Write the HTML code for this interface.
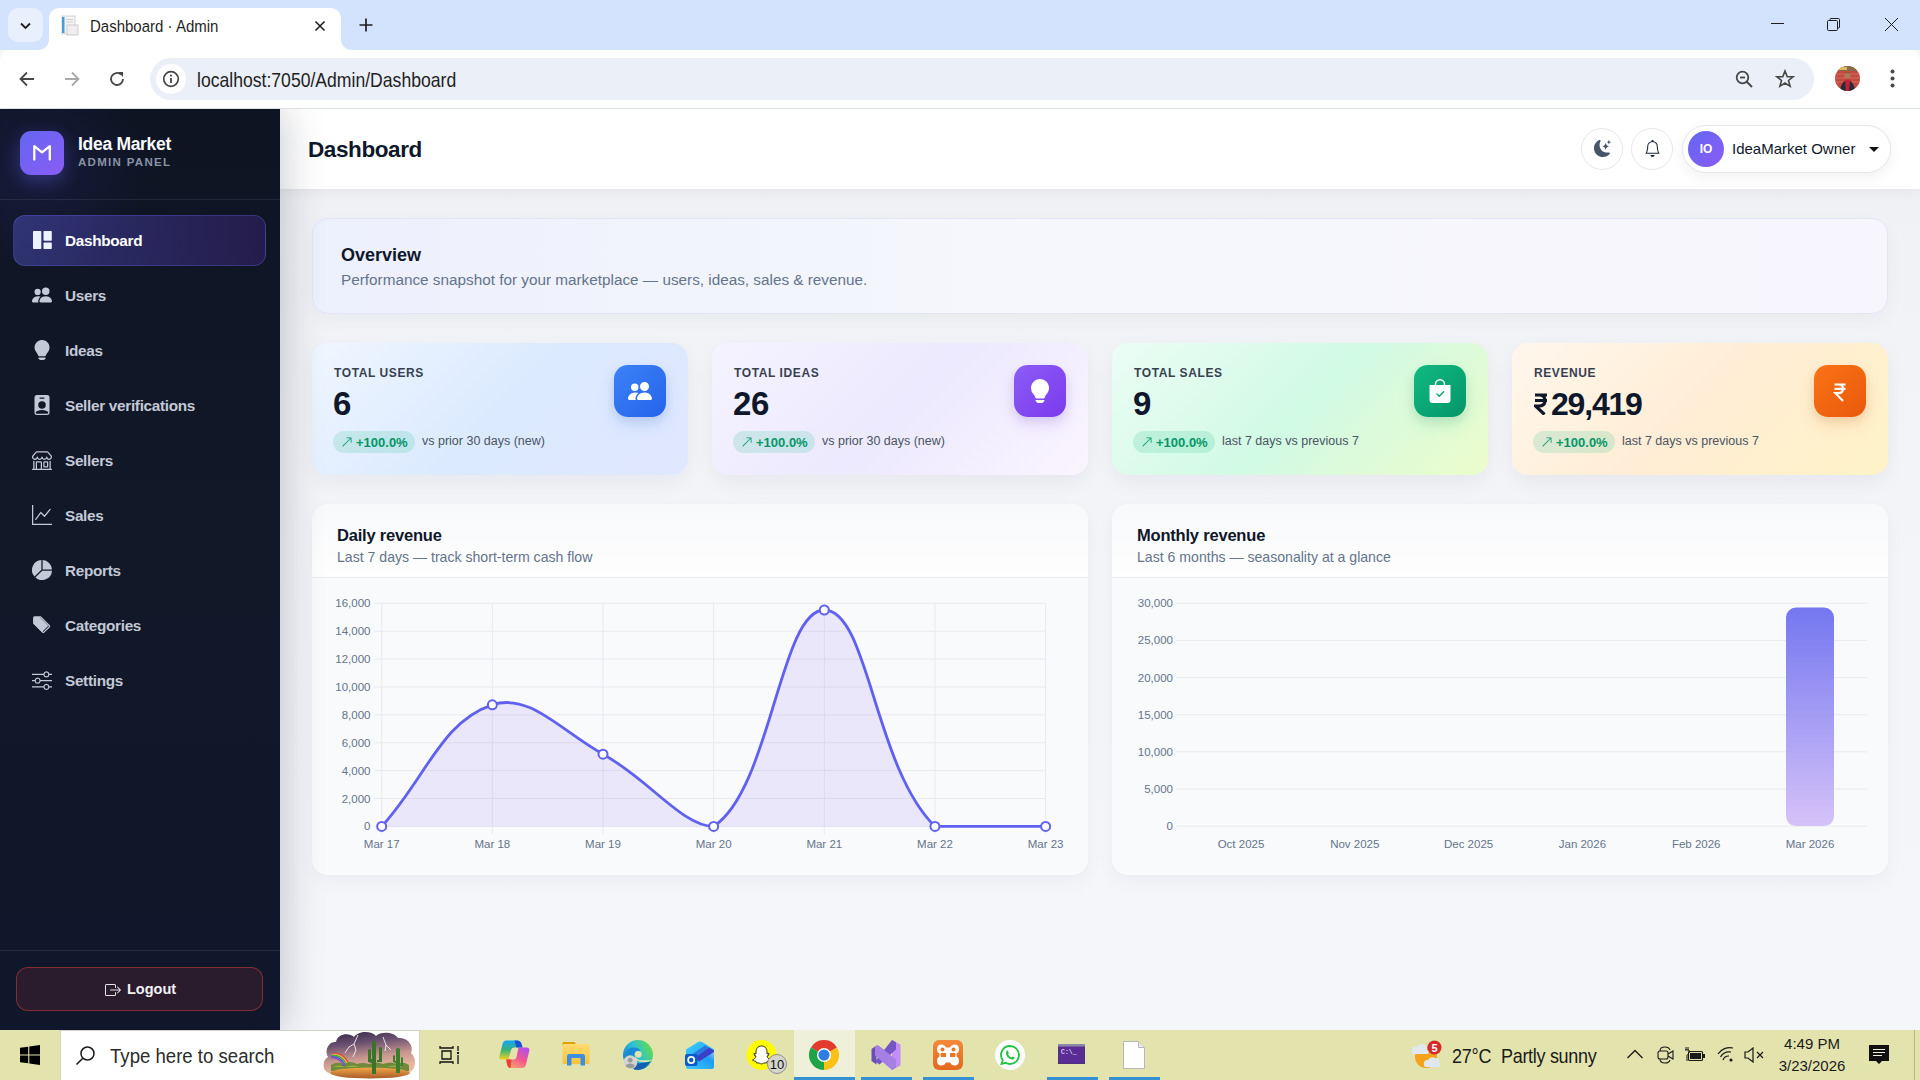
<!DOCTYPE html>
<html><head><meta charset="utf-8"><title>Dashboard · Admin</title>
<style>
*{box-sizing:border-box;margin:0;padding:0}
html,body{width:1920px;height:1080px;overflow:hidden;font-family:"Liberation Sans",sans-serif;background:#f5f6fa}
.abs{position:absolute}
/* ---------- browser chrome ---------- */
#tabstrip{position:absolute;left:0;top:0;width:1920px;height:50px;background:#d3e3fd;z-index:5}
#tabdd{position:absolute;left:8px;top:8px;width:35px;height:34px;border-radius:10px;background:#e8effd}
#tab{position:absolute;left:49px;top:8px;width:292px;height:42px;background:#fff;border-radius:10px 10px 0 0}
#tab:before,#tab:after{content:"";position:absolute;bottom:0;width:10px;height:10px;background:radial-gradient(circle at 0 0,transparent 10px,#fff 10.5px)}
#tab:before{left:-10px;background:radial-gradient(circle at 0 0,transparent 9.5px,#fff 10px)}
#tab:after{right:-10px;background:radial-gradient(circle at 100% 0,transparent 9.5px,#fff 10px)}
#tabtitle{position:absolute;left:41px;top:9px;font-size:15px;color:#1f1f1f;white-space:nowrap;transform:scaleY(1.1);transform-origin:0 0}
#toolbar{position:absolute;left:0;top:50px;width:1920px;height:58px;background:#fff;border-radius:10px 10px 0 0;z-index:5}
#tbline{position:absolute;left:0;top:108px;width:1920px;height:1px;background:#dcdfe3;z-index:5}
#omni{position:absolute;left:150px;top:8px;width:1664px;height:42px;border-radius:21px;background:#ebeff8}
#omniinfo{position:absolute;left:6px;top:6px;width:30px;height:30px;border-radius:15px;background:#fff}
#url{position:absolute;left:47px;top:11px;font-size:17.6px;color:#1f1f1f;white-space:nowrap;transform:scaleY(1.1);transform-origin:0 0}
/* ---------- sidebar ---------- */
#sidebar{position:absolute;z-index:2;left:0;top:109px;width:280px;height:921px;background:linear-gradient(180deg,#0e1422 0%,#111828 45%,#10172a 100%);
  box-shadow:2px 0 40px rgba(15,23,42,.24)}
#sbglow{position:absolute;left:0;top:0;width:280px;height:400px;background:radial-gradient(ellipse 170px 150px at 30px 60px,rgba(79,70,229,.13),transparent 70%)}
#sbhead{position:absolute;left:0;top:0;width:280px;height:91px;border-bottom:1px solid rgba(148,163,184,.14)}
#logo{position:absolute;left:20px;top:22px;width:44px;height:44px;border-radius:11px;background:linear-gradient(135deg,#6366f1,#8b5cf6);box-shadow:0 6px 18px rgba(99,102,241,.35)}
#brand{position:absolute;left:78px;top:25px;font-size:17.5px;font-weight:700;color:#f8fafc;letter-spacing:-.3px;white-space:nowrap}
#brandsub{position:absolute;left:78px;top:47px;font-size:11.5px;font-weight:700;color:#8a93a6;letter-spacing:1.3px;white-space:nowrap}
.nav{position:absolute;left:13px;width:253px;height:51px;border-radius:12px}
.nav.active{background:linear-gradient(90deg,rgba(99,102,241,.36),rgba(124,58,237,.2));border:1px solid rgba(99,102,241,.32)}
.nav svg{position:absolute;left:19px;top:15px;width:20px;height:20px;fill:#c3c9d6}
.nav.active svg{fill:#eef2ff}
.nav span{position:absolute;left:52px;top:17px;font-size:15.3px;font-weight:700;color:#c3c9d6;white-space:nowrap;letter-spacing:-.3px}
.nav.active span{color:#fff;top:16px;left:51px}
#sbfoot{position:absolute;left:0;top:841px;width:280px;height:1px;background:rgba(148,163,184,.14)}
#logout{position:absolute;left:16px;top:858px;width:247px;height:44px;border-radius:12px;background:#2a1b2d;border:1px solid rgba(239,68,68,.45)}
#logout span{position:absolute;left:110px;top:13px;font-size:14.5px;font-weight:700;color:#f1f1f4}
#logout svg{position:absolute;left:88px;top:14px;width:16px;height:16px}
/* ---------- main ---------- */
#main{position:absolute;left:280px;top:109px;width:1640px;height:921px;background:linear-gradient(180deg,#eff0f4 0px,#f2f3f7 240px,#f4f5f9 500px,#f5f6fa 921px);overflow:hidden}
#header{position:absolute;left:0;top:0;width:1640px;height:80px;background:#fff;box-shadow:0 2px 14px rgba(15,23,42,.06);z-index:1}
#ptitle{position:absolute;left:28px;top:28px;font-size:22.5px;font-weight:700;color:#0f172a;letter-spacing:-.4px}
.hbtn{position:absolute;top:19px;width:42px;height:42px;border-radius:21px;border:1px solid #e5e7eb;background:#fff}
#userpill{position:absolute;left:1402px;top:16px;width:209px;height:48px;border-radius:24px;border:1px solid #e5e7eb;background:#fff;box-shadow:0 4px 14px rgba(15,23,42,.06)}
#avatar{position:absolute;left:5px;top:5px;width:36px;height:36px;border-radius:18px;background:linear-gradient(135deg,#6366f1,#8b5cf6)}
#avatar span{position:absolute;left:0;top:11px;width:36px;text-align:center;font-size:12px;font-weight:700;color:#fff}
#uname{position:absolute;left:49px;top:14px;font-size:15px;color:#0f172a;white-space:nowrap}
#caret{position:absolute;left:186px;top:21px;width:0;height:0;border-left:5px solid transparent;border-right:5px solid transparent;border-top:5px solid #111}
#overview{position:absolute;left:32px;top:109px;width:1576px;height:96px;border-radius:16px;border:1px solid #e2e4f9;
  background:linear-gradient(90deg,#edf0fd 0%,#f5f7fc 45%,#f7f5fd 100%);box-shadow:0 6px 20px rgba(15,23,42,.035)}
#ovt{position:absolute;left:28px;top:26px;font-size:18px;font-weight:700;color:#0f172a}
#ovs{position:absolute;left:28px;top:52px;font-size:15.3px;color:#64748b;white-space:nowrap}
.stat{position:absolute;top:234px;width:376px;height:132px;border-radius:16px;box-shadow:0 8px 22px rgba(15,23,42,.05)}
.stat .lbl{position:absolute;left:22px;top:23px;font-size:12px;font-weight:700;letter-spacing:.6px;color:#374151;white-space:nowrap}
.stat .val{position:absolute;left:21px;top:42px;font-size:33px;font-weight:700;color:#0f172a;letter-spacing:-.3px;white-space:nowrap}
.stat .badge{position:absolute;left:21px;top:88px;width:82px;height:22px;border-radius:11px;background:rgba(16,185,129,.16)}
.stat .badge span{position:absolute;left:23px;top:4px;font-size:13px;font-weight:700;color:#059669;white-space:nowrap}
.stat .badge svg{position:absolute;left:8px;top:5px;width:12px;height:12px}
.stat .note{position:absolute;left:110px;top:91px;font-size:12.5px;color:#4b5563;white-space:nowrap}
.stat .ico{position:absolute;left:302px;top:22px;width:52px;height:52px;border-radius:14px}
.stat .ico svg{position:absolute;left:14px;top:14px;width:24px;height:24px;fill:#fff}
.chart{position:absolute;top:395px;width:776px;height:371px;border-radius:16px;background:#f9fafc;box-shadow:0 6px 18px rgba(15,23,42,.045);overflow:hidden}
.chart .ch{position:absolute;left:0;top:0;width:776px;height:74px;background:linear-gradient(180deg,#f8f9fb,#fefefe);border-bottom:1px solid #e9ebef}
.chart .ct{position:absolute;left:25px;top:22px;font-size:16.5px;letter-spacing:-.2px;font-weight:700;color:#0f172a;white-space:nowrap}
.chart .cs{position:absolute;left:25px;top:45px;font-size:14.1px;color:#64748b;white-space:nowrap}
.tk{font-family:"Liberation Sans",sans-serif;font-size:11.5px;fill:#64748b}
/* ---------- taskbar ---------- */
#taskbar{position:absolute;z-index:6;left:0;top:1030px;width:1920px;height:50px;background:#e3e3ae}
#search{position:absolute;left:60px;top:0px;width:360px;height:50px;background:#fff;border:1px solid #cfcfc4;border-bottom:none}
#search span{position:absolute;left:49px;top:13px;font-size:18.6px;color:#2b2b2b;white-space:nowrap;transform:scaleY(1.1);transform-origin:0 0}
</style></head>
<body>
<!-- browser chrome -->
<div id="tabstrip">
  <div id="tabdd"><svg class="abs" style="left:10px;top:10px" width="15" height="15" viewBox="0 0 15 15"><path d="M3 5.5 L7.5 10 L12 5.5" stroke="#1f1f1f" stroke-width="1.8" fill="none"/></svg></div>
  <div id="tab">
    <svg class="abs" style="left:11px;top:7px" width="20" height="21" viewBox="0 0 20 21"><rect x="2" y="1" width="13" height="18" fill="#f4f4f4" stroke="#c9c9c9" stroke-width=".8"/><rect x="2" y="2" width="2.5" height="16" fill="#4b9ad8"/><rect x="7" y="10" width="11" height="10" fill="#eee" stroke="#c4c4c4" stroke-width=".8"/><rect x="6" y="4" width="7" height="1" fill="#ccc"/><rect x="6" y="6.5" width="7" height="1" fill="#ccc"/></svg>
    <div id="tabtitle">Dashboard · Admin</div>
    <svg class="abs" style="left:265px;top:12px" width="12" height="12" viewBox="0 0 12 12"><path d="M1.5 1.5 L10.5 10.5 M10.5 1.5 L1.5 10.5" stroke="#1f1f1f" stroke-width="1.6"/></svg>
  </div>
  <svg class="abs" style="left:358px;top:17px" width="16" height="16" viewBox="0 0 16 16"><path d="M8 1.5 V14.5 M1.5 8 H14.5" stroke="#1f1f1f" stroke-width="1.7"/></svg>
  <svg class="abs" style="left:1770px;top:17px" width="15" height="14" viewBox="0 0 15 14"><path d="M1 6.5 H14" stroke="#1f1f1f" stroke-width="1"/></svg>
  <svg class="abs" style="left:1826px;top:17px" width="15" height="15" viewBox="0 0 15 15"><rect x="1.5" y="3.5" width="10" height="10" rx="1" fill="none" stroke="#1f1f1f" stroke-width="1"/><path d="M4 3.5 V2.5 Q4 1.5 5 1.5 H12.5 Q13.5 1.5 13.5 2.5 V10 Q13.5 11 12.5 11 H11.5" fill="none" stroke="#1f1f1f" stroke-width="1"/></svg>
  <svg class="abs" style="left:1884px;top:17px" width="15" height="15" viewBox="0 0 15 15"><path d="M1 1 L14 14 M14 1 L1 14" stroke="#1f1f1f" stroke-width="1"/></svg>
</div>
<div id="toolbar">
  <svg class="abs" style="left:18px;top:20px" width="18" height="18" viewBox="0 0 18 18"><path d="M16 9 H2.5 M9 2.5 L2.5 9 L9 15.5" stroke="#474747" stroke-width="1.8" fill="none"/></svg>
  <svg class="abs" style="left:63px;top:20px" width="18" height="18" viewBox="0 0 18 18"><path d="M2 9 H15.5 M9 2.5 L15.5 9 L9 15.5" stroke="#a8a8a8" stroke-width="1.8" fill="none"/></svg>
  <svg class="abs" style="left:108px;top:20px" width="18" height="18" viewBox="0 0 18 18"><path d="M15 9 A6 6 0 1 1 13 4.5" stroke="#474747" stroke-width="1.8" fill="none"/><path d="M10 2 H15 V7 Z" fill="#474747"/></svg>
  <div id="omni">
    <div id="omniinfo"><svg class="abs" style="left:6px;top:6px" width="18" height="18" viewBox="0 0 18 18"><circle cx="9" cy="9" r="7.3" stroke="#474747" stroke-width="1.7" fill="none"/><rect x="8.1" y="8" width="1.8" height="5" fill="#474747"/><circle cx="9" cy="5.6" r="1.1" fill="#474747"/></svg></div>
    <div id="url">localhost:7050/Admin/Dashboard</div>
    <svg class="abs" style="left:1585px;top:12px" width="20" height="20" viewBox="0 0 20 20"><circle cx="7.5" cy="7.5" r="5.8" stroke="#474747" stroke-width="1.8" fill="none"/><path d="M5 7.5 H10" stroke="#474747" stroke-width="1.8"/><path d="M11.5 11.5 L17 17" stroke="#474747" stroke-width="1.9"/></svg>
    <svg class="abs" style="left:1625px;top:11px" width="20" height="20" viewBox="0 0 20 20"><path d="M10 2 L12.2 7.6 L18 7.8 L13.5 11.5 L15.1 17.3 L10 14 L4.9 17.3 L6.5 11.5 L2 7.8 L7.8 7.6 Z" stroke="#474747" stroke-width="1.6" fill="none" stroke-linejoin="miter"/></svg>
  </div>
  <svg class="abs" style="left:1835px;top:16px" width="25" height="25" viewBox="0 0 25 25"><defs><clipPath id="avc"><circle cx="12.5" cy="12.5" r="12.5"/></clipPath></defs><g clip-path="url(#avc)">
    <rect width="25" height="25" fill="#c24a3e"/>
    <rect x="0" y="0" width="25" height="5" fill="#8a6a4a"/><rect x="4" y="1" width="8" height="3" fill="#d8b860"/>
    <path d="M0 8 H25 M0 12 H25 M0 16 H25" stroke="#e07a6a" stroke-width=".7"/>
    <circle cx="12.5" cy="9.5" r="3.3" fill="#b07858"/><path d="M9 8 Q12.5 4.5 16 8 Q14 6.5 12.5 6.5 Q11 6.5 9 8 Z" fill="#2a1e1e"/>
    <path d="M5 25 Q6 15 12.5 14 Q19 15 20 25 Z" fill="#2a2a3a"/>
    <path d="M10 14 Q12.5 13 15 14 L14 25 H11 Z" fill="#c8203a"/>
  </g></svg>
  <svg class="abs" style="left:1888px;top:19px" width="9" height="20" viewBox="0 0 9 20"><circle cx="4.5" cy="2.5" r="2" fill="#474747"/><circle cx="4.5" cy="9.5" r="2" fill="#474747"/><circle cx="4.5" cy="16.5" r="2" fill="#474747"/></svg>
</div>
<div id="tbline"></div>

<!-- sidebar -->
<div id="sidebar">
  <div id="sbglow"></div>
  <div id="sbhead">
    <div id="logo"><svg class="abs" style="left:11px;top:13px" width="22" height="18" viewBox="0 0 22 18"><path d="M3.3 15.6 V2.2 L11.05 8.4 L18.8 2.2 V15.6" stroke="#fff" stroke-width="2.3" fill="none" stroke-linejoin="round" stroke-linecap="round"/></svg></div>
    <div id="brand">Idea Market</div>
    <div id="brandsub">ADMIN PANEL</div>
  </div>
  <div class="nav active" style="top:106px">
    <svg viewBox="0 0 20 20" style="left:18px;top:14px;width:20px;height:20px"><rect x="1" y="1" width="8.3" height="18" rx=".8"/><rect x="11.5" y="1" width="8.3" height="9.7" rx=".8"/><rect x="11.5" y="12.5" width="8.3" height="6.5" rx=".8"/></svg>
    <span>Dashboard</span></div>
  <div class="nav" style="top:161px">
    <svg viewBox="0 0 16 16"><path d="M7 14s-1 0-1-1 1-4 5-4 5 3 5 4-1 1-1 1zm4-6a3 3 0 1 0 0-6 3 3 0 0 0 0 6m-5.784 6A2.24 2.24 0 0 1 5 13c0-1.355.68-2.75 1.936-3.72A6.3 6.3 0 0 0 5 9c-4 0-5 3-5 4s1 1 1 1zM4.5 8a2.5 2.5 0 1 0 0-5 2.5 2.5 0 0 0 0 5"/></svg>
    <span>Users</span></div>
  <div class="nav" style="top:216px">
    <svg viewBox="0 0 16 16"><path d="M2 6a6 6 0 1 1 10.174 4.31c-.203.196-.359.4-.453.619l-.762 1.769A.5.5 0 0 1 10.5 13h-5a.5.5 0 0 1-.46-.302l-.761-1.77a2 2 0 0 0-.453-.618A5.98 5.98 0 0 1 2 6m3 8.5a.5.5 0 0 1 .5-.5h5a.5.5 0 0 1 0 1l-.224.447a1 1 0 0 1-.894.553H6.618a1 1 0 0 1-.894-.553L5.5 15a.5.5 0 0 1-.5-.5"/></svg>
    <span>Ideas</span></div>
  <div class="nav" style="top:271px">
    <svg viewBox="0 0 16 16"><path d="M2 2a2 2 0 0 1 2-2h8a2 2 0 0 1 2 2v12a2 2 0 0 1-2 2H4a2 2 0 0 1-2-2zm4.5 0a.5.5 0 0 0 0 1h3a.5.5 0 0 0 0-1zM8 11a3 3 0 1 0 0-6 3 3 0 0 0 0 6m5 2.755C12.146 12.825 10.623 12 8 12s-4.146.826-5 1.755V14a1 1 0 0 0 1 1h8a1 1 0 0 0 1-1z"/></svg>
    <span>Seller verifications</span></div>
  <div class="nav" style="top:326px">
    <svg viewBox="0 0 16 16"><path d="M2.97 1.35A1 1 0 0 1 3.73 1h8.54a1 1 0 0 1 .76.35l2.609 3.044A1.5 1.5 0 0 1 16 5.37v.255a2.375 2.375 0 0 1-4.25 1.458A2.37 2.37 0 0 1 9.875 8 2.37 2.37 0 0 1 8 7.083 2.37 2.37 0 0 1 6.125 8a2.37 2.37 0 0 1-1.875-.917A2.375 2.375 0 0 1 0 5.625V5.37a1.5 1.5 0 0 1 .361-.976zm1.78 4.275a1.375 1.375 0 0 0 2.75 0 .5.5 0 0 1 1 0 1.375 1.375 0 0 0 2.75 0 .5.5 0 0 1 1 0 1.375 1.375 0 1 0 2.75 0V5.37a.5.5 0 0 0-.12-.325L12.27 2H3.73L1.12 5.045A.5.5 0 0 0 1 5.37v.255a1.375 1.375 0 0 0 2.75 0 .5.5 0 0 1 1 0M1.5 8.5A.5.5 0 0 1 2 9v6h1v-5a1 1 0 0 1 1-1h3a1 1 0 0 1 1 1v5h6V9a.5.5 0 0 1 1 0v6h.5a.5.5 0 0 1 0 1H.5a.5.5 0 0 1 0-1H1V9a.5.5 0 0 1 .5-.5M4 15h3v-5H4zm5-5a1 1 0 0 1 1-1h2a1 1 0 0 1 1 1v3a1 1 0 0 1-1 1h-2a1 1 0 0 1-1-1zm3 0h-2v3h2z"/></svg>
    <span>Sellers</span></div>
  <div class="nav" style="top:381px">
    <svg viewBox="0 0 16 16"><path fill-rule="evenodd" d="M0 0h1v15h15v1H0zm14.817 3.113a.5.5 0 0 1 .07.704l-4.5 5.5a.5.5 0 0 1-.74.037L7.06 6.767l-3.656 5.027a.5.5 0 0 1-.808-.588l4-5.5a.5.5 0 0 1 .758-.06l2.609 2.61 4.15-5.073a.5.5 0 0 1 .704-.07"/></svg>
    <span>Sales</span></div>
  <div class="nav" style="top:436px">
    <svg viewBox="0 0 16 16"><path d="M15.985 8.5H8.207l-5.5 5.5a8 8 0 0 0 13.277-5.5zM2 13.292A8 8 0 0 1 7.5.015v7.778zM8.5.015V7.5h7.485A8 8 0 0 0 8.5.015"/></svg>
    <span>Reports</span></div>
  <div class="nav" style="top:491px">
    <svg viewBox="0 0 16 16"><path d="M2 2v4.586l7 7L13.586 9l-7-7zM1 2a1 1 0 0 1 1-1h4.586a1 1 0 0 1 .707.293l7 7a1 1 0 0 1 0 1.414l-4.586 4.586a1 1 0 0 1-1.414 0l-7-7A1 1 0 0 1 1 6.586z"/><path d="M2 2v4.586l7 7L13.586 9l-7-7zm2.5 3a.5.5 0 1 1 0-1 .5.5 0 0 1 0 1" style="display:none"/><path d="M1 2.5 v4 l7 7 l5-5 l-7-7 h-4 z M4.5 6 a1.5 1.5 0 1 0 0-3 a1.5 1.5 0 0 0 0 3"/></svg>
    <span>Categories</span></div>
  <div class="nav" style="top:546px">
    <svg viewBox="0 0 16 16"><path fill-rule="evenodd" d="M11.5 2a1.5 1.5 0 1 0 0 3 1.5 1.5 0 0 0 0-3M9.05 3a2.5 2.5 0 0 1 4.9 0H16v1h-2.05a2.5 2.5 0 0 1-4.9 0H0V3zM4.5 7a1.5 1.5 0 1 0 0 3 1.5 1.5 0 0 0 0-3M2.05 8a2.5 2.5 0 0 1 4.9 0H16v1H6.95a2.5 2.5 0 0 1-4.9 0H0V8zm9.45 4a1.5 1.5 0 1 0 0 3 1.5 1.5 0 0 0 0-3m-2.45 1a2.5 2.5 0 0 1 4.9 0H16v1h-2.05a2.5 2.5 0 0 1-4.9 0H0v-1z"/></svg>
    <span>Settings</span></div>
  <div id="sbfoot"></div>
  <div id="logout">
    <svg viewBox="0 0 16 16" fill="#e4e4e8"><path fill-rule="evenodd" d="M10 12.5a.5.5 0 0 1-.5.5h-8a.5.5 0 0 1-.5-.5v-9a.5.5 0 0 1 .5-.5h8a.5.5 0 0 1 .5.5v2a.5.5 0 0 0 1 0v-2A1.5 1.5 0 0 0 9.5 2h-8A1.5 1.5 0 0 0 0 3.5v9A1.5 1.5 0 0 0 1.5 14h8a1.5 1.5 0 0 0 1.5-1.5v-2a.5.5 0 0 0-1 0z"/><path fill-rule="evenodd" d="M15.854 8.354a.5.5 0 0 0 0-.708l-3-3a.5.5 0 0 0-.708.708L14.293 7.5H5.5a.5.5 0 0 0 0 1h8.793l-2.147 2.146a.5.5 0 0 0 .708.708z"/></svg>
    <span>Logout</span></div>
</div>

<!-- main -->
<div id="main">
  <div id="header">
    <div id="ptitle">Dashboard</div>
    <div class="hbtn" style="left:1301px"><svg class="abs" style="left:12px;top:11px" width="17" height="17" viewBox="0 0 16 16" fill="#475569"><path d="M6 .278a.77.77 0 0 1 .08.858 7.2 7.2 0 0 0-.878 3.46c0 4.021 3.278 7.277 7.318 7.277q.792-.001 1.533-.16a.79.79 0 0 1 .81.316.73.73 0 0 1-.031.893A8.350 8.350 0 0 1 8.344 16C3.734 16 0 12.286 0 7.710 0 4.266 2.114 1.312 5.124.06A.75.75 0 0 1 6 .278"/><path d="M10.794 3.148a.217.217 0 0 1 .412 0l.387 1.162c.173.518.579.924 1.097 1.097l1.162.387a.217.217 0 0 1 0 .412l-1.162.387a1.73 1.73 0 0 0-1.097 1.097l-.387 1.162a.217.217 0 0 1-.412 0l-.387-1.162A1.73 1.730 0 0 0 9.31 6.593l-1.162-.387a.217.217 0 0 1 0-.412l1.162-.387a1.73 1.73 0 0 0 1.097-1.097zM13.863.099a.145.145 0 0 1 .274 0l.258.774c.115.346.386.617.732.732l.774.258a.145.145 0 0 1 0 .274l-.774.258a1.16 1.16 0 0 0-.732.732l-.258.774a.145.145 0 0 1-.274 0l-.258-.774a1.16 1.16 0 0 0-.732-.732l-.774-.258a.145.145 0 0 1 0-.274l.774-.258c.346-.115.617-.386.732-.732z"/></svg></div>
    <div class="hbtn" style="left:1351px"><svg class="abs" style="left:12px;top:11px" width="17" height="17" viewBox="0 0 16 16" fill="#1e293b"><path d="M8 16a2 2 0 0 0 2-2H6a2 2 0 0 0 2 2M8 1.918l-.797.161A4 4 0 0 0 4 6c0 .628-.134 2.197-.459 3.742-.16.767-.376 1.566-.663 2.258h10.244c-.287-.692-.502-1.490-.663-2.258C12.134 8.197 12 6.628 12 6a4 4 0 0 0-3.203-3.920zM14.220 12c.223.447.481.801.78 1H1c.299-.199.557-.553.78-1C2.680 10.200 3 6.880 3 6c0-2.420 1.720-4.440 4.005-4.901a1 1 0 1 1 1.990 0A5 5 0 0 1 13 6c0 .880.320 4.200 1.220 6"/></svg></div>
    <div id="userpill"><div id="avatar"><span>IO</span></div><div id="uname">IdeaMarket Owner</div><div id="caret"></div></div>
  </div>
  <div id="overview">
    <div id="ovt">Overview</div>
    <div id="ovs">Performance snapshot for your marketplace — users, ideas, sales &amp; revenue.</div>
  </div>
  <div class="stat" style="left:32px;background:linear-gradient(135deg,#eff6ff 0%,#dbeafe 50%,#e0e7ff 100%)">
    <div class="lbl">TOTAL USERS</div><div class="val">6</div>
    <div class="badge"><svg viewBox="0 0 16 16" fill="#059669"><path fill-rule="evenodd" d="M14 2.5a.5.5 0 0 0-.5-.5h-6a.5.5 0 0 0 0 1h4.793L2.146 13.146a.5.5 0 0 0 .708.708L13 3.707V8.5a.5.5 0 0 0 1 0z"/></svg><span>+100.0%</span></div><div class="note">vs prior 30 days (new)</div>
    <div class="ico" style="background:linear-gradient(135deg,#3b82f6,#2563eb);box-shadow:0 8px 16px rgba(59,130,246,.16),0 4px 10px rgba(15,23,42,.08)"><svg viewBox="0 0 16 16"><path d="M7 14s-1 0-1-1 1-4 5-4 5 3 5 4-1 1-1 1zm4-6a3 3 0 1 0 0-6 3 3 0 0 0 0 6m-5.784 6A2.24 2.24 0 0 1 5 13c0-1.355.68-2.75 1.936-3.72A6.3 6.3 0 0 0 5 9c-4 0-5 3-5 4s1 1 1 1zM4.5 8a2.5 2.5 0 1 0 0-5 2.5 2.5 0 0 0 0 5"/></svg></div>
  </div>
  <div class="stat" style="left:432px;background:linear-gradient(135deg,#f5f3ff 0%,#ede9fe 50%,#faf5ff 100%)">
    <div class="lbl">TOTAL IDEAS</div><div class="val">26</div>
    <div class="badge"><svg viewBox="0 0 16 16" fill="#059669"><path fill-rule="evenodd" d="M14 2.5a.5.5 0 0 0-.5-.5h-6a.5.5 0 0 0 0 1h4.793L2.146 13.146a.5.5 0 0 0 .708.708L13 3.707V8.5a.5.5 0 0 0 1 0z"/></svg><span>+100.0%</span></div><div class="note">vs prior 30 days (new)</div>
    <div class="ico" style="background:linear-gradient(135deg,#8b5cf6,#7c3aed);box-shadow:0 8px 16px rgba(139,92,246,.16),0 4px 10px rgba(15,23,42,.08)"><svg viewBox="0 0 16 16"><path d="M2 6a6 6 0 1 1 10.174 4.31c-.203.196-.359.4-.453.619l-.762 1.769A.5.5 0 0 1 10.5 13h-5a.5.5 0 0 1-.46-.302l-.761-1.77a2 2 0 0 0-.453-.618A5.98 5.98 0 0 1 2 6m3 8.5a.5.5 0 0 1 .5-.5h5a.5.5 0 0 1 0 1l-.224.447a1 1 0 0 1-.894.553H6.618a1 1 0 0 1-.894-.553L5.5 15a.5.5 0 0 1-.5-.5"/></svg></div>
  </div>
  <div class="stat" style="left:832px;background:linear-gradient(135deg,#ecfdf5 0%,#d1fae5 50%,#ecfccb 100%)">
    <div class="lbl">TOTAL SALES</div><div class="val">9</div>
    <div class="badge"><svg viewBox="0 0 16 16" fill="#059669"><path fill-rule="evenodd" d="M14 2.5a.5.5 0 0 0-.5-.5h-6a.5.5 0 0 0 0 1h4.793L2.146 13.146a.5.5 0 0 0 .708.708L13 3.707V8.5a.5.5 0 0 0 1 0z"/></svg><span>+100.0%</span></div><div class="note">last 7 days vs previous 7</div>
    <div class="ico" style="background:linear-gradient(135deg,#10b981,#059669);box-shadow:0 8px 16px rgba(16,185,129,.16),0 4px 10px rgba(15,23,42,.08)"><svg viewBox="0 0 16 16"><path fill-rule="evenodd" d="M10.5 3.5a2.5 2.5 0 0 0-5 0V4h5zm1 0V4H15v10a2 2 0 0 1-2 2H3a2 2 0 0 1-2-2V4h3.5v-.5a3.5 3.5 0 1 1 7 0m-.646 5.354a.5.5 0 0 0-.708-.708L7.5 10.793 6.354 9.646a.5.5 0 1 0-.708.708l1.5 1.5a.5.5 0 0 0 .708 0z"/></svg></div>
  </div>
  <div class="stat" style="left:1232px;background:linear-gradient(135deg,#fff7ed 0%,#ffedd5 50%,#fef3c7 100%)">
    <div class="lbl">REVENUE</div><div class="val" style="left:22px"><svg style="display:inline-block;vertical-align:baseline;margin-right:3px" width="14" height="22" viewBox="0 0 14 22"><path d="M1 2 H13 M1 7.5 H13 M1 2 H5 C10 2 11 4.5 11 7.5 C11 11.5 8 13 4.5 13 H1.5 L10.5 21.5" stroke="#0f172a" stroke-width="3.2" fill="none" stroke-linejoin="miter"/></svg><span style="letter-spacing:-1.2px;font-size:32px">29,419</span></div>
    <div class="badge"><svg viewBox="0 0 16 16" fill="#059669"><path fill-rule="evenodd" d="M14 2.5a.5.5 0 0 0-.5-.5h-6a.5.5 0 0 0 0 1h4.793L2.146 13.146a.5.5 0 0 0 .708.708L13 3.707V8.5a.5.5 0 0 0 1 0z"/></svg><span>+100.0%</span></div><div class="note">last 7 days vs previous 7</div>
    <div class="ico" style="background:linear-gradient(135deg,#f97316,#ea580c);box-shadow:0 8px 16px rgba(249,115,22,.16),0 4px 10px rgba(15,23,42,.08)"><svg viewBox="0 0 24 24" style="fill:none"><path d="M6.5 5.5 H17.5 M6.5 9.8 H17.5 M6.5 5.5 H10 C14 5.5 15 7.5 15 9.8 C15 12.8 12.6 14.2 10 14.2 H7.5 L15 22" stroke="#fff" stroke-width="2.2" fill="none"/></svg></div>
  </div>
  <div class="chart" style="left:32px"><div class="ch"><div class="ct">Daily revenue</div><div class="cs">Last 7 days — track short-term cash flow</div></div>
    <svg id="dsvg" class="abs" style="left:0;top:0" width="776" height="371" viewBox="312 504 776 371"><line x1="374" y1="826.40" x2="1045.6" y2="826.40" stroke="#e8eaee" stroke-width="1"/>
<text x="370.5" y="830.40" text-anchor="end" class="tk">0</text>
<line x1="374" y1="798.51" x2="1045.6" y2="798.51" stroke="#e8eaee" stroke-width="1"/>
<text x="370.5" y="802.51" text-anchor="end" class="tk">2,000</text>
<line x1="374" y1="770.62" x2="1045.6" y2="770.62" stroke="#e8eaee" stroke-width="1"/>
<text x="370.5" y="774.62" text-anchor="end" class="tk">4,000</text>
<line x1="374" y1="742.74" x2="1045.6" y2="742.74" stroke="#e8eaee" stroke-width="1"/>
<text x="370.5" y="746.74" text-anchor="end" class="tk">6,000</text>
<line x1="374" y1="714.85" x2="1045.6" y2="714.85" stroke="#e8eaee" stroke-width="1"/>
<text x="370.5" y="718.85" text-anchor="end" class="tk">8,000</text>
<line x1="374" y1="686.96" x2="1045.6" y2="686.96" stroke="#e8eaee" stroke-width="1"/>
<text x="370.5" y="690.96" text-anchor="end" class="tk">10,000</text>
<line x1="374" y1="659.07" x2="1045.6" y2="659.07" stroke="#e8eaee" stroke-width="1"/>
<text x="370.5" y="663.07" text-anchor="end" class="tk">12,000</text>
<line x1="374" y1="631.19" x2="1045.6" y2="631.19" stroke="#e8eaee" stroke-width="1"/>
<text x="370.5" y="635.19" text-anchor="end" class="tk">14,000</text>
<line x1="374" y1="603.30" x2="1045.6" y2="603.30" stroke="#e8eaee" stroke-width="1"/>
<text x="370.5" y="607.30" text-anchor="end" class="tk">16,000</text>
<line x1="381.70" y1="603.3" x2="381.70" y2="834.4" stroke="#e8eaee" stroke-width="1"/>
<text x="381.70" y="848.00" text-anchor="middle" class="tk">Mar 17</text>
<line x1="492.35" y1="603.3" x2="492.35" y2="834.4" stroke="#e8eaee" stroke-width="1"/>
<text x="492.35" y="848.00" text-anchor="middle" class="tk">Mar 18</text>
<line x1="603.00" y1="603.3" x2="603.00" y2="834.4" stroke="#e8eaee" stroke-width="1"/>
<text x="603.00" y="848.00" text-anchor="middle" class="tk">Mar 19</text>
<line x1="713.65" y1="603.3" x2="713.65" y2="834.4" stroke="#e8eaee" stroke-width="1"/>
<text x="713.65" y="848.00" text-anchor="middle" class="tk">Mar 20</text>
<line x1="824.30" y1="603.3" x2="824.30" y2="834.4" stroke="#e8eaee" stroke-width="1"/>
<text x="824.30" y="848.00" text-anchor="middle" class="tk">Mar 21</text>
<line x1="934.95" y1="603.3" x2="934.95" y2="834.4" stroke="#e8eaee" stroke-width="1"/>
<text x="934.95" y="848.00" text-anchor="middle" class="tk">Mar 22</text>
<line x1="1045.60" y1="603.3" x2="1045.60" y2="834.4" stroke="#e8eaee" stroke-width="1"/>
<text x="1045.60" y="848.00" text-anchor="middle" class="tk">Mar 23</text>
<path d="M381.70,826.40 C425.96,777.76 441.39,721.44 492.35,704.81 C529.91,692.55 560.66,730.91 603.00,754.17 C649.18,779.54 682.47,826.40 713.65,826.40 C770.99,789.04 780.04,610.01 824.30,610.01 C868.56,610.01 874.12,766.92 934.95,826.40 C962.64,826.40 1001.34,826.40 1045.60,826.40 L1045.60,826.40 L381.70,826.40 Z" fill="rgba(130,110,235,.13)"/>
<path d="M381.70,826.40 C425.96,777.76 441.39,721.44 492.35,704.81 C529.91,692.55 560.66,730.91 603.00,754.17 C649.18,779.54 682.47,826.40 713.65,826.40 C770.99,789.04 780.04,610.01 824.30,610.01 C868.56,610.01 874.12,766.92 934.95,826.40 C962.64,826.40 1001.34,826.40 1045.60,826.40" fill="none" stroke="#6161f0" stroke-width="2.8"/>
<circle cx="381.70" cy="826.40" r="4.5" fill="#fff" stroke="#6161f0" stroke-width="2"/>
<circle cx="492.35" cy="704.81" r="4.5" fill="#fff" stroke="#6161f0" stroke-width="2"/>
<circle cx="603.00" cy="754.17" r="4.5" fill="#fff" stroke="#6161f0" stroke-width="2"/>
<circle cx="713.65" cy="826.40" r="4.5" fill="#fff" stroke="#6161f0" stroke-width="2"/>
<circle cx="824.30" cy="610.01" r="4.5" fill="#fff" stroke="#6161f0" stroke-width="2"/>
<circle cx="934.95" cy="826.40" r="4.5" fill="#fff" stroke="#6161f0" stroke-width="2"/>
<circle cx="1045.60" cy="826.40" r="4.5" fill="#fff" stroke="#6161f0" stroke-width="2"/></svg></div>
  <div class="chart" style="left:832px"><div class="ch"><div class="ct">Monthly revenue</div><div class="cs">Last 6 months — seasonality at a glance</div></div>
    <svg id="msvg" class="abs" style="left:0;top:0" width="776" height="371" viewBox="1112 504 776 371"><line x1="1176" y1="826.10" x2="1867" y2="826.10" stroke="#e8eaee" stroke-width="1"/>
<text x="1173" y="830.10" text-anchor="end" class="tk">0</text>
<line x1="1176" y1="788.97" x2="1867" y2="788.97" stroke="#e8eaee" stroke-width="1"/>
<text x="1173" y="792.97" text-anchor="end" class="tk">5,000</text>
<line x1="1176" y1="751.83" x2="1867" y2="751.83" stroke="#e8eaee" stroke-width="1"/>
<text x="1173" y="755.83" text-anchor="end" class="tk">10,000</text>
<line x1="1176" y1="714.70" x2="1867" y2="714.70" stroke="#e8eaee" stroke-width="1"/>
<text x="1173" y="718.70" text-anchor="end" class="tk">15,000</text>
<line x1="1176" y1="677.57" x2="1867" y2="677.57" stroke="#e8eaee" stroke-width="1"/>
<text x="1173" y="681.57" text-anchor="end" class="tk">20,000</text>
<line x1="1176" y1="640.43" x2="1867" y2="640.43" stroke="#e8eaee" stroke-width="1"/>
<text x="1173" y="644.43" text-anchor="end" class="tk">25,000</text>
<line x1="1176" y1="603.30" x2="1867" y2="603.30" stroke="#e8eaee" stroke-width="1"/>
<text x="1173" y="607.30" text-anchor="end" class="tk">30,000</text>
<text x="1241.00" y="848" text-anchor="middle" class="tk">Oct 2025</text>
<text x="1354.80" y="848" text-anchor="middle" class="tk">Nov 2025</text>
<text x="1468.60" y="848" text-anchor="middle" class="tk">Dec 2025</text>
<text x="1582.40" y="848" text-anchor="middle" class="tk">Jan 2026</text>
<text x="1696.20" y="848" text-anchor="middle" class="tk">Feb 2026</text>
<text x="1810.00" y="848" text-anchor="middle" class="tk">Mar 2026</text>
<defs><linearGradient id="bg1" x1="0" y1="0" x2="0" y2="1"><stop offset="0" stop-color="#7477f0"/><stop offset="1" stop-color="#d5c2f8"/></linearGradient></defs>
<rect x="1786" y="607.61" width="48" height="218.49" rx="10" fill="url(#bg1)"/></svg></div>
</div>

<!-- taskbar -->
<div id="taskbar">
  <svg class="abs" style="left:20px;top:15px" width="20" height="20" viewBox="0 0 20 20" fill="#000"><path d="M0 2.8 L8.2 1.7 V9.5 H0 Z M9.3 1.5 L20 0 V9.5 H9.3 Z M0 10.5 H8.2 V18.3 L0 17.2 Z M9.3 10.5 H20 V20 L9.3 18.5 Z"/></svg>
  <div id="search">
    <svg class="abs" style="left:14px;top:14px" width="21" height="21" viewBox="0 0 21 21"><circle cx="12.5" cy="8.5" r="6.5" stroke="#1a1a1a" stroke-width="1.5" fill="none"/><path d="M7.8 13.2 L1.5 19.5" stroke="#1a1a1a" stroke-width="1.6"/></svg>
    <span>Type here to search</span>
    <svg class="abs" style="left:262px;top:0px" width="94" height="48" viewBox="0 0 94 48">
      <defs><linearGradient id="wsky" x1="0" y1="0" x2="0.3" y2="1"><stop offset="0" stop-color="#2e2440"/><stop offset=".35" stop-color="#6a5070"/><stop offset=".7" stop-color="#c89890"/><stop offset="1" stop-color="#e8b8a0"/></linearGradient>
      <linearGradient id="wsand" x1="0" y1="0" x2="0" y2="1"><stop offset="0" stop-color="#f2a848"/><stop offset="1" stop-color="#a85a28"/></linearGradient></defs>
      <path d="M6 42 C-1 40 -1 29 5 26 C1 19 6 10 13 11 C14 3 26 1 31 6 C36 -1 49 0 53 5 C58 0 71 1 75 7 C85 6 91 15 88 22 C94 27 93 38 87 41 Z" fill="url(#wsky)"/>
      <path d="M8 34 Q14 30 20 33 Q26 29 34 33 Q40 31 46 33 Q54 30 60 33 Q68 30 74 33 Q80 30 86 34 V40 H8 Z" fill="#6f8a3a"/>
      <path d="M10 36 Q16 33 22 36 Q30 33 36 36 H10 Z M64 36 Q72 33 80 36 H64 Z" fill="#9ab040"/>
      <ellipse cx="47" cy="42" rx="40" ry="5.5" fill="url(#wsand)"/>
      <path d="M35 4 L31 13 L26 16 L22 22 M31 13 L33 19 L30 26 M60 6 L63 14 L68 19 M63 14 L62 20" stroke="#f4eef4" stroke-width="0.9" fill="none"/>
      <path d="M10 22 A17 17 0 0 1 25 31" stroke="#e84040" stroke-width="1.1" fill="none"/>
      <path d="M9.5 23.2 A16 16 0 0 1 24 32" stroke="#f0c020" stroke-width="1.1" fill="none"/>
      <path d="M9 24.4 A15 15 0 0 1 23 33" stroke="#40b040" stroke-width="1.1" fill="none"/>
      <path d="M8.5 25.6 A14 14 0 0 1 22 34" stroke="#4060e0" stroke-width="1.1" fill="none"/>
      <path d="M8 26.8 A13 13 0 0 1 21 35" stroke="#9040d0" stroke-width="1.1" fill="none"/>
      <path d="M49 43 V11 Q51 8.5 53 11 V43 Z M45 31 V19 Q46.5 17 48 19 V28 H49 V32 Z M54 29 H56 V17 Q57.5 15 59 17 V31 H54 Z" fill="#3a7428"/>
      <path d="M73 42 V18 Q75 16 77 18 V42 Z M70 31 V25 Q71 23 72 25 V30 H73 V32 Z M77 34 H78 V27 Q79 25 80 27 V35 H77 Z" fill="#3f7c2c"/>
    </svg>
  </div>
  <svg class="abs" style="left:439px;top:15px" width="22" height="20" viewBox="0 0 22 20" fill="none" stroke="#111" stroke-width="1.3"><path d="M1 1 V3 H14 V1 M1 19 V17 H14 V19 M3 6 H12 V14 H3 Z"/><path d="M19 1 V6 M19 10 V19"/><rect x="18" y="7" width="2" height="2" fill="#111" stroke="none"/></svg>
  <!-- copilot -->
  <svg class="abs" style="left:499px;top:1040px;top:10px" width="31" height="29" viewBox="0 0 31 29">
    <defs><linearGradient id="cp1" x1="0" y1="0" x2="0" y2="1"><stop offset="0" stop-color="#12a4f4"/><stop offset=".5" stop-color="#3ab27a"/><stop offset="1" stop-color="#f2d21a"/></linearGradient>
    <linearGradient id="cp2" x1="0.8" y1="0" x2="0.2" y2="1"><stop offset="0" stop-color="#b54df2"/><stop offset=".5" stop-color="#f0568e"/><stop offset="1" stop-color="#fba46a"/></linearGradient></defs>
    <path d="M7 0.5 H18 Q21.5 0.5 22.5 4 L23.5 7.5 H15 Q12.5 7.5 12 10 L9.5 19.5 H3 Q-0.5 19.5 0.5 16 L3.5 4 Q4.5 0.5 7 0.5 Z" fill="url(#cp1)"/>
    <path d="M15.5 0.5 H18 Q21.5 0.5 22.5 4 L23.5 7.5 H17.5 Z" fill="#1d4fd6"/>
    <path d="M19.5 7.5 H27.5 Q31 7.5 30.2 11 L27 24.5 Q26 28 23 28 H12 Q9 28 8.2 25 L7.2 19.5 H14.5 Q17 19.5 17.5 17 L19.5 7.5 Z" fill="url(#cp2)"/>
    <path d="M7.2 19.5 H12.5 L11.5 28 Q9 28 8.2 25 Z" fill="#ea3f34"/>
  </svg>
  <!-- explorer -->
  <svg class="abs" style="left:562px;top:11px" width="28" height="25" viewBox="0 0 28 25">
    <defs><linearGradient id="fx" x1="0" y1="0" x2="0" y2="1"><stop offset="0" stop-color="#ffdb70"/><stop offset="1" stop-color="#f6c23e"/></linearGradient></defs>
    <path d="M0.5 2 Q0.5 1 1.5 1 H12.5 L14 3 L12.5 5 H0.5 Z" fill="#dfa000"/>
    <rect x="0.5" y="3" width="27" height="20" rx="1.5" fill="url(#fx)"/>
    <path d="M5 24.5 V15.5 Q5 13 7.5 13 H20.5 Q23 13 23 15.5 V24.5 H18.5 V17 H9.5 V24.5 Z" fill="#3a8fde"/>
  </svg>
  <!-- edge -->
  <svg class="abs" style="left:623px;top:10px" width="31" height="31" viewBox="0 0 31 31">
    <defs><linearGradient id="ed1" x1="0" y1="0.8" x2="1" y2="0.3"><stop offset="0" stop-color="#1378d0"/><stop offset=".5" stop-color="#2cc0d8"/><stop offset="1" stop-color="#62dc4c"/></linearGradient></defs>
    <circle cx="15" cy="15" r="15" fill="url(#ed1)"/>
    <path d="M1 17 Q3 8 10 7.5 Q16 7 17.5 11 Q14 9.5 12 12 Q10 15 12 19 L8 25 Q1 23 1 17 Z" fill="#1a8ad6"/>
    <circle cx="15.3" cy="14.3" r="3.4" fill="#e3e3ae"/>
    <path d="M12 16 Q13 20 19 20.3 H27 Q29.5 20 30 17.5 Q29 21.5 24 22 Q16 22.5 12 19.5 Z" fill="#e3e3ae"/>
    <path d="M10 23.5 Q17 23.5 22.5 22.5 Q26 22 27.5 21.5 Q23 29.5 15 30 Q11 30 9 28 Z" fill="#1460b0"/>
    <circle cx="7.2" cy="22.4" r="6.6" fill="#d3d3d3" stroke="#e3e3ae" stroke-width=".8"/><circle cx="7.2" cy="20.2" r="2.4" fill="#9a9a9a"/><path d="M2.6 26 Q3.5 23.5 7.2 23.5 Q10.9 23.5 11.8 26 Q10 28.3 7.2 28.3 Q4.4 28.3 2.6 26 Z" fill="#9a9a9a"/>
  </svg>
  <!-- outlook -->
  <svg class="abs" style="left:685px;top:10px" width="30" height="30" viewBox="0 0 30 30">
    <defs><linearGradient id="ol1" x1="0" y1="0" x2="1" y2="1"><stop offset="0" stop-color="#38d0fa"/><stop offset="1" stop-color="#1e8ff0"/></linearGradient>
    <linearGradient id="ol2" x1="0" y1="1" x2="1" y2="0"><stop offset="0" stop-color="#40c8f8"/><stop offset=".7" stop-color="#1a9cf4"/><stop offset="1" stop-color="#a0b8f8"/></linearGradient></defs>
    <path d="M1 9.5 L13 2 Q15 0.8 17 2 L29 9.5 V26 Q29 29 26 29 H4 Q1 29 1 26 Z" fill="url(#ol1)"/>
    <path d="M6 15 L20 5.5 L24 7.8 L10 17.5 Z" fill="#2a78e0"/>
    <path d="M10 17.5 L24 7.8 L29 10.5 V12 L14 21.5 Z" fill="#3a40c8"/>
    <path d="M1 14 L15 22 L29 12 V26 Q29 29 26 29 H4 Q1 29 1 26 Z" fill="url(#ol2)"/>
    <rect x="0" y="14" width="12.5" height="12" rx="2" fill="#0b5cc6"/>
    <circle cx="6.2" cy="20" r="3.1" fill="none" stroke="#fff" stroke-width="1.7"/>
  </svg>
  <!-- snapchat -->
  <svg class="abs" style="left:746px;top:10px" width="42" height="34" viewBox="0 0 42 34">
    <circle cx="15.5" cy="15" r="15" fill="#fffc00"/>
    <path d="M15.5 6 C19.5 6 21 9 21 12 V14 L23 13.5 L22.5 15.5 L21 16 C21.5 18 23 19.5 24.5 20 C23.5 21 22 21 21 21.5 L20.5 23 C18.5 22.5 17 23.5 15.5 24 C14 23.5 12.5 22.5 10.5 23 L10 21.5 C9 21 7.5 21 6.5 20 C8 19.5 9.5 18 10 16 L8.5 15.5 L8 13.5 L10 14 V12 C10 9 11.5 6 15.5 6 Z" fill="#fff" stroke="#222" stroke-width=".9"/>
    <circle cx="31" cy="24" r="9.5" fill="#d5d5cc" stroke="#888" stroke-width=".9"/>
    <text x="31" y="29" text-anchor="middle" font-family="Liberation Sans" font-size="13" fill="#111">10</text>
  </svg>
  <!-- chrome active -->
  <div class="abs" style="left:794px;top:0;width:61px;height:50px;background:#eef0da"></div>
  <div class="abs" style="left:794px;top:47px;width:61px;height:3px;background:#3592d2"></div>
  <svg class="abs" style="left:809px;top:10px" width="30" height="30" viewBox="0 0 30 30">
    <path d="M15 15 L2 7.5 A15 15 0 0 1 28 7.5 Z" fill="#e33b2e"/>
    <path d="M15 15 L28 7.5 A15 15 0 0 1 15 30 Z" fill="#fbc116"/>
    <path d="M15 15 L15 30 A15 15 0 0 1 2 7.5 Z" fill="#1ea446"/>
    <circle cx="15" cy="15" r="7" fill="#fff"/><circle cx="15" cy="15" r="5.6" fill="#2f7de1"/>
  </svg>
  <!-- VS -->
  <div class="abs" style="left:861px;top:47px;width:51px;height:3px;background:#3592d2"></div>
  <svg class="abs" style="left:871px;top:10px" width="30" height="30" viewBox="0 0 30 30">
    <path d="M0.5 9 L5.5 5.5 V24.5 L0.5 21 Z" fill="#6a4db6"/>
    <path d="M21 0 L29.5 4.5 V25.5 L21 30 Z" fill="#c28ff6"/>
    <path d="M21 0 L25 2.2 V9.5 L8.5 24.5 L4 21.5 Z" fill="#7655c6"/>
    <path d="M5.5 5.5 Q6.5 4.8 8 5.8 L25 19.5 V27.8 L21 30 L4 15.5 V6.5 Z" fill="#a57fe4"/>
  </svg>
  <!-- xampp -->
  <div class="abs" style="left:923px;top:47px;width:51px;height:3px;background:#3592d2"></div>
  <svg class="abs" style="left:933px;top:10px" width="30" height="30" viewBox="0 0 30 30">
    <defs><linearGradient id="xp" x1="0" y1="0" x2="0" y2="1"><stop offset="0" stop-color="#f4893a"/><stop offset="1" stop-color="#e26a1c"/></linearGradient></defs>
    <rect x="0" y="0" width="30" height="30" rx="6" fill="url(#xp)"/>
    <path d="M8.5 4.5 Q4 4.5 4 9.5 Q4 12.5 6.5 13.5 V16.5 Q4 17.5 4 20.5 Q4 25.5 8.5 25.5 Q11.5 25.5 13 22.5 H17 Q18.5 25.5 21.5 25.5 Q26 25.5 26 20.5 Q26 17.5 23.5 16.5 V13.5 Q26 12.5 26 9.5 Q26 4.5 21.5 4.5 Q18.5 4.5 17 7.5 H13 Q11.5 4.5 8.5 4.5 Z" fill="#fff"/>
    <path d="M8 13 H13 V17 H8 Q6.8 15 8 13 Z M22 13 H17 V17 H22 Q23.2 15 22 13 Z" fill="#ec7626"/>
    <circle cx="9.5" cy="9.5" r="2" fill="#ec7626"/><circle cx="20.5" cy="9.5" r="2" fill="#ec7626"/>
  </svg>
  <!-- whatsapp -->
  <svg class="abs" style="left:995px;top:10px" width="30" height="30" viewBox="0 0 30 30">
    <circle cx="15" cy="15" r="15" fill="#fff"/>
    <path d="M15 6 A9 9 0 0 1 15 24 A9 9 0 0 1 10.5 22.8 L6.5 24 L7.7 20.2 A9 9 0 0 1 15 6 Z" fill="none" stroke="#25c145" stroke-width="1.8"/>
    <path d="M11.5 11 Q12.5 10 13 11 L13.8 13 Q13.6 13.8 13 14.2 Q14.2 16.6 16.4 17.4 Q17 16.7 17.6 16.5 L19.3 17.4 Q19.8 18.5 18.8 19.2 Q16 20 13 17.5 Q10 14.5 11.5 11 Z" fill="#25c145"/>
  </svg>
  <!-- cmd -->
  <div class="abs" style="left:1047px;top:47px;width:51px;height:3px;background:#3592d2"></div>
  <svg class="abs" style="left:1058px;top:14px" width="27" height="20" viewBox="0 0 27 20">
    <rect x="0" y="0" width="27" height="20" fill="#5a2c96" stroke="#3a3a5a" stroke-width=".8"/>
    <rect x="0" y="0" width="27" height="2.5" fill="#8a8aa8"/>
    <text x="3" y="10" font-family="Liberation Mono" font-size="6.5" fill="#fff">C:\_</text>
  </svg>
  <!-- blank file -->
  <div class="abs" style="left:1109px;top:47px;width:51px;height:3px;background:#3592d2"></div>
  <svg class="abs" style="left:1123px;top:11px" width="22" height="28" viewBox="0 0 22 28">
    <path d="M0.5 0.5 H15.5 L21.5 6.5 V27.5 H0.5 Z" fill="#fff" stroke="#b7b7b7"/>
    <path d="M15.5 0.5 V6.5 H21.5" fill="#e8e8e8" stroke="#b7b7b7"/>
  </svg>
  <!-- tray -->
  <svg class="abs" style="left:1411px;top:9px" width="34" height="30" viewBox="0 0 34 30">
    <circle cx="15" cy="18" r="11" fill="#f5a21c"/>
    <path d="M1 12 Q1 7 6 8 Q8 3 13 6 Q17 6 16 11 Q19 12 17 15 H3 Q0 15 1 12 Z" fill="#dfe7f0"/>
    <path d="M13 26 Q12 21 17 21 Q19 17 24 19 Q29 19 28 23 Q31 25 28 28 H16 Q13 28 13 26 Z" fill="#dfe7f0"/>
    <circle cx="23.5" cy="8.5" r="7" fill="#d42a2a"/>
    <text x="23.5" y="12.5" text-anchor="middle" font-family="Liberation Sans" font-weight="700" font-size="11" fill="#fff">5</text>
  </svg>
  <div class="abs" style="left:1452px;top:15px;font-size:18px;color:#1a1a1a;white-space:nowrap;letter-spacing:-.2px;transform:scaleY(1.1);transform-origin:0 0">27°C</div><div class="abs" style="left:1501px;top:15px;font-size:18px;color:#1a1a1a;white-space:nowrap;letter-spacing:-.3px;transform:scaleY(1.1);transform-origin:0 0">Partly sunny</div>
  <svg class="abs" style="left:1626px;top:18px" width="18" height="12" viewBox="0 0 18 12"><path d="M1.5 10 L9 2.5 L16.5 10" stroke="#1a1a1a" stroke-width="1.3" fill="none"/></svg>
  <svg class="abs" style="left:1657px;top:16px" width="17" height="18" viewBox="0 0 17 18" fill="none" stroke="#1a1a1a" stroke-width="1.1"><path d="M3 5 Q3 1 8 1 Q12 1 13 4 M3 13 Q3 17 8 17 Q12 17 13 14"/><rect x="1" y="5" width="10" height="8" rx="2"/><path d="M11 8 L16 5 V13 L11 10"/></svg>
  <svg class="abs" style="left:1684px;top:16px" width="22" height="16" viewBox="0 0 22 16"><path d="M2 1 V4 M4 1 V4 M1 4 H5 V7 Q3 9 3 9 V15" stroke="#1a1a1a" stroke-width="1" fill="none"/><rect x="4.5" y="5.5" width="14" height="9" rx="1" fill="none" stroke="#1a1a1a" stroke-width="1.1"/><rect x="6" y="7" width="11" height="6" fill="#1a1a1a"/><rect x="19" y="8" width="2" height="4" fill="#1a1a1a"/></svg>
  <svg class="abs" style="left:1717px;top:16px" width="18" height="17" viewBox="0 0 18 17" fill="none" stroke="#1a1a1a" stroke-width="1.2"><path d="M1 8 A14 14 0 0 1 16 2 M3.5 11 A10 10 0 0 1 14 6 M6 14 A6 6 0 0 1 12 10"/><circle cx="14" cy="14" r="1.6" fill="#1a1a1a" stroke="none"/></svg>
  <svg class="abs" style="left:1744px;top:17px" width="21" height="16" viewBox="0 0 21 16" fill="none" stroke="#1a1a1a" stroke-width="1.2"><path d="M1 5 H4 L9 1 V15 L4 11 H1 Z"/><path d="M13 5 L19 11 M19 5 L13 11"/></svg>
  <div class="abs" style="left:1762px;top:5px;width:100px;text-align:center;font-size:15px;color:#1a1a1a">4:49 PM</div>
  <div class="abs" style="left:1762px;top:27px;width:100px;text-align:center;font-size:15px;color:#1a1a1a">3/23/2026</div>
  <svg class="abs" style="left:1868px;top:14px" width="22" height="22" viewBox="0 0 22 22"><path d="M1 1 H21 V17 H14 L11 20 L8 17 H1 Z" fill="#111"/><path d="M5 5.5 H17 M5 8.5 H17 M5 11.5 H14" stroke="#f0f0e0" stroke-width="1"/></svg>
  <div class="abs" style="left:1914px;top:0;width:1px;height:50px;background:#b8b890"></div>
</div>
</body></html>
